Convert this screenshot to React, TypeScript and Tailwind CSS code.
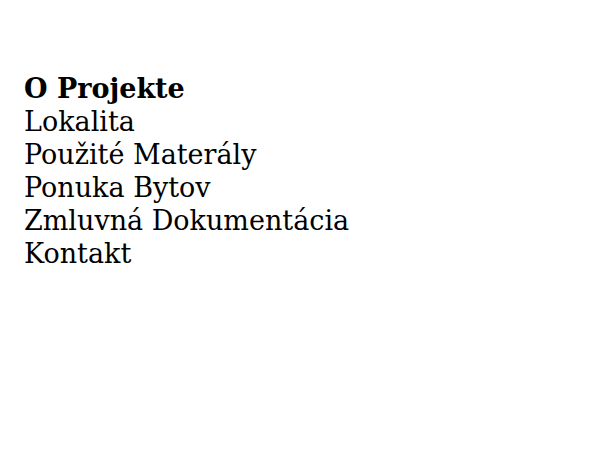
const items = [
  'O Projekte',
  'Lokalita',
  'Použité Materály',
  'Ponuka Bytov',
  'Zmluvná Dokumentácia',
  'Kontakt',
];

export default function App() {
  return (
    <div className="min-h-[450px] w-[600px] bg-white px-6 pt-[72px] font-['DejaVu_Serif',serif] text-[27px] leading-[33px] text-black">
      <ul className="flex flex-col">
        {items.map((item, i) => (
          <li key={item} className={i === 0 ? 'font-bold' : ''}>
            {item}
          </li>
        ))}
      </ul>
    </div>
  );
}
